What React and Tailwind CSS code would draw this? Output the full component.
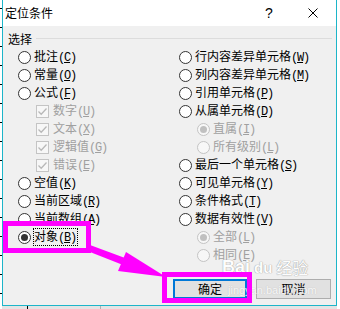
import React from "react";
import clsx from "clsx";

const leftItems = [
  { kind: "radio", text: "批注", key: "C" },
  { kind: "radio", text: "常量", key: "O" },
  { kind: "radio", text: "公式", key: "F" },
  { kind: "check", text: "数字", key: "U", disabled: true, indent: true },
  { kind: "check", text: "文本", key: "X", disabled: true, indent: true },
  { kind: "check", text: "逻辑值", key: "G", disabled: true, indent: true },
  { kind: "check", text: "错误", key: "E", disabled: true, indent: true },
  { kind: "radio", text: "空值", key: "K" },
  { kind: "radio", text: "当前区域", key: "R" },
  { kind: "radio", text: "当前数组", key: "A" },
  { kind: "radio", text: "对象", key: "B", checked: true, focus: true },
];

const rightItems = [
  { kind: "radio", text: "行内容差异单元格", key: "W" },
  { kind: "radio", text: "列内容差异单元格", key: "M" },
  { kind: "radio", text: "引用单元格", key: "P" },
  { kind: "radio", text: "从属单元格", key: "D" },
  { kind: "radio", text: "直属", key: "I", disabled: true, checked: true, indent: true },
  { kind: "radio", text: "所有级别", key: "L", disabled: true, indent: true },
  { kind: "radio", text: "最后一个单元格", key: "S" },
  { kind: "radio", text: "可见单元格", key: "Y" },
  { kind: "radio", text: "条件格式", key: "T" },
  { kind: "radio", text: "数据有效性", key: "V" },
  { kind: "radio", text: "全部", key: "L", disabled: true, checked: true, indent: true },
  { kind: "radio", text: "相同", key: "E", disabled: true, indent: true },
];

const Radio = ({ checked, disabled }) => (
  <span
    className={clsx(
      "flex h-[13px] w-[13px] shrink-0 items-center justify-center rounded-full border",
      disabled ? "border-[#c4c4c4] bg-[#f7f7f7]" : "border-[#333333] bg-white"
    )}
  >
    {checked && (
      <span
        className={clsx(
          "h-[7px] w-[7px] rounded-full",
          disabled ? "bg-[#c0c0c0]" : "bg-[#333333]"
        )}
      />
    )}
  </span>
);

const Check = () => (
  <span className="flex h-[13px] w-[13px] shrink-0 items-center justify-center border border-[#c4c4c4] bg-[#f7f7f7]">
    <svg width="11" height="11" viewBox="0 0 11 11">
      <path d="M1.5 5.5 L4.2 8.2 L9.5 2.5" fill="none" stroke="#b8b8b8" strokeWidth="1.3" />
    </svg>
  </span>
);

const Label = ({ text, k }) => (
  <span className="whitespace-nowrap">
    {text}
    <span className="font-['Liberation_Mono',monospace] text-[12px] tracking-[-1.2px]">
      (<span className="underline underline-offset-[1px]">{k}</span>)
    </span>
  </span>
);

const Row = ({ item }) => (
  <div
    className={clsx(
      "flex h-[18px] items-center",
      item.indent && "ml-[18px]",
      item.disabled ? "text-[#a0a0a0]" : "text-black"
    )}
  >
    {item.kind === "radio" ? (
      <Radio checked={item.checked} disabled={item.disabled} />
    ) : (
      <Check />
    )}
    {item.focus ? (
      <span className="ml-[2px] flex h-[18px] items-center border border-dotted border-black pr-[1px]">
        <Label text={item.text} k={item.key} />
      </span>
    ) : (
      <span className={clsx(item.kind === "check" ? "ml-[4px]" : "ml-[3px]")}>
        <Label text={item.text} k={item.key} />
      </span>
    )}
  </div>
);

const App = () => {
  return (
    <div className="relative flex h-[309px] w-[340px] overflow-hidden bg-white font-['Noto_Sans_CJK_SC',sans-serif] text-[12px] leading-[18px]">
      {/* spreadsheet behind, left edge */}
      <div className="flex w-[2px] flex-col gap-[18px] pt-[8px]">
        {Array.from({ length: 16 }).map((_, i) => (
          <div key={i} className="h-px w-[2px] bg-black" />
        ))}
      </div>

      <div className="flex w-[335px] flex-col">
        <div className="flex h-[306px] flex-col border-x border-b border-[#1cb5c9]">
          {/* title bar */}
          <div className="flex h-[26px] items-center bg-white">
            <span className="pl-[2px] text-[12px] text-black">定位条件</span>
            <div className="flex-1" />
            <span className="w-[46px] pl-[4px] text-center font-['Liberation_Sans',sans-serif] text-[14px]">?</span>
            <span className="flex w-[46px] items-center justify-center">
              <svg width="10" height="10" viewBox="0 0 10 10">
                <path d="M0.5 0.5 L9.5 9.5 M9.5 0.5 L0.5 9.5" stroke="#000" strokeWidth="1" />
              </svg>
            </span>
          </div>

          {/* body */}
          <div className="flex flex-1 flex-col bg-[#f0f0f0] pt-[4px]">
            <div className="flex h-[18px] items-center pl-[5px] pr-[4px]">
              <span>选择</span>
              <div className="ml-[4px] mt-[-2px] h-px flex-1 bg-[#dcdcdc]" />
            </div>

            <div className="flex">
              <div className="flex w-[176px] flex-col pl-[15px]">
                {leftItems.map((it, i) => (
                  <Row key={i} item={it} />
                ))}
              </div>
              <div className="flex flex-col">
                {rightItems.map((it, i) => (
                  <Row key={i} item={it} />
                ))}
              </div>
            </div>

            <div className="mt-[15px] flex justify-end gap-[9px] pr-[5px]">
              <button className="flex h-[20px] w-[74px] items-center justify-center border-2 border-[#0078d7] bg-[#e1e1e1] text-[12px]">
                确定
              </button>
              <button className="flex h-[20px] w-[75px] items-center justify-center border border-[#adadad] bg-[#e1e1e1] text-[12px]">
                取消
              </button>
            </div>
          </div>
        </div>
        {/* shadow strip below the dialog */}
        <div className="flex h-[3px] bg-[#e4e4e4]">
          <div className="ml-[25px] h-[3px] w-px bg-black" />
          <div className="ml-[72px] h-[3px] w-px bg-[#b0b0b0]" />
        </div>
      </div>

      <div className="w-[3px] bg-white" />

      {/* baidu watermark */}
      <div className="pointer-events-none absolute left-[222px] top-[258px] flex items-end text-white opacity-90 [text-shadow:0_0_1px_#9a9a9a,0_0_1px_#9a9a9a]">
        <span className="font-['Liberation_Sans',sans-serif] text-[18px] font-bold leading-[18px]">Bai</span>
        <span className="ml-[4px] font-['Liberation_Sans',sans-serif] text-[15px] font-bold leading-[16px]">du</span>
        <span className="ml-[4px] text-[16px] leading-[18px]">经验</span>
      </div>
      <div className="pointer-events-none absolute left-[228px] top-[284px] font-['Liberation_Sans',sans-serif] text-[11px] leading-[12px] text-white opacity-80 [text-shadow:0_0_1px_#aaaaaa]">
        jingyan.baidu.com
      </div>

      {/* annotation */}
      <svg className="pointer-events-none absolute left-0 top-0" width="340" height="309" viewBox="0 0 340 309">
        <rect x="5.5" y="223.5" width="83" height="27" fill="none" stroke="#ff00ff" strokeWidth="5" />
        <rect x="164.5" y="274.5" width="85" height="26" fill="none" stroke="#ff00ff" strokeWidth="5" />
        <polygon points="90,245 90,252 123,265 125,258" fill="#ff00ff" />
        <polygon points="126,252 118,271 166,277" fill="#ff00ff" />
      </svg>
    </div>
  );
};

export default App;
